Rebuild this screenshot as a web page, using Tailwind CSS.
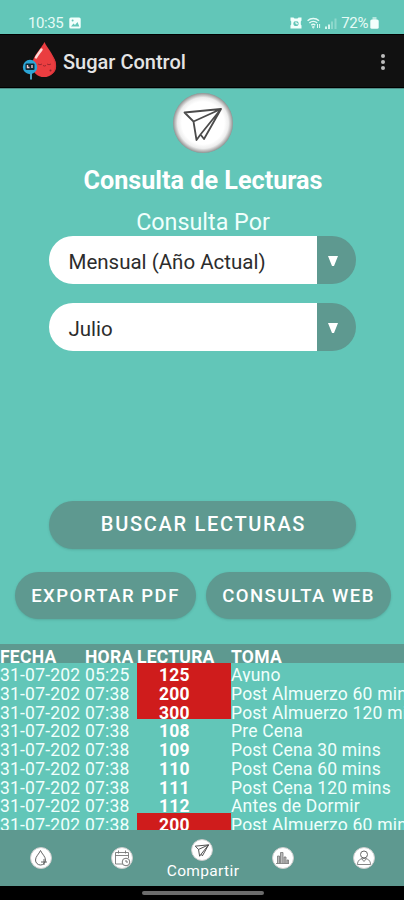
<!DOCTYPE html>
<html lang="es">
<head>
  <meta charset="UTF-8" />
  <title>Sugar Control</title>
  <meta name="viewport" content="width=device-width, initial-scale=1.0" />
  <script src="https://cdn.jsdelivr.net/npm/@tailwindcss/browser@4"></script>
</head>

<body class="bg-[#62c6b8] font-[Roboto,sans-serif] text-white overflow-hidden">
  <div class="w-[404px] h-[900px] flex flex-col overflow-hidden">

    <!-- Status bar -->
    <div class="h-[34px] shrink-0 flex items-end justify-between pl-7 pr-[25px] pb-[3px] text-[#e6fbf6]">
      <div class="flex items-center gap-[6px]">
        <span class="text-[15px] leading-4 tracking-[-0.4px]">10:35</span>
        <svg class="w-3 h-3" viewBox="0 0 12 12">
          <rect x="0.3" y="0.5" width="11.4" height="11" rx="1.5" fill="#f2fffc" />
          <path d="M2 9.5 4.5 6.5 6 8 8.5 5 10.3 9.5z" fill="#62c6b8" />
          <circle cx="3.6" cy="3.6" r="1" fill="#62c6b8" />
        </svg>
      </div>
      <div class="flex items-center">
        <svg class="w-3 h-3 mr-[5px]" viewBox="0 0 12 12">
          <path d="M.5 .5h3l1 1h3l1-1h3v3l-.7 1v3l.7 1v3H.5v-3l.7-1v-3l-.7-1z" fill="#f2fffc" />
          <circle cx="6" cy="6.5" r="2.6" fill="#62c6b8" />
          <path d="M6 4.5v2.3h2" fill="none" stroke="#fff" />
        </svg>
        <svg class="w-[14px] h-3 mr-1" viewBox="0 0 14 12" fill="none" stroke="#e6fbf6" stroke-width="1.5">
          <path d="M.6 3.8a8.5 8.5 0 0 1 11.4 0M2.4 6a6 6 0 0 1 7.8 0M4.3 8.2a3 3 0 0 1 4 0" />
          <path d="M5.3 9.7h2l-1 1.6zM10.5 7v4M12.6 7v4" stroke-width="1" />
        </svg>
        <svg class="w-3 h-3 mr-1" viewBox="0 0 12 12">
          <path d="M0 9.5h2V12H0zM3 7.5h2V12H3z" fill="#d5f5ef" />
          <path d="M6 4.5h2V12H6zM9.5 1.5h2V12h-2z" fill="#8dd8cc" />
        </svg>
        <span class="text-[15px] leading-4 tracking-[-0.4px]">72%</span>
        <svg class="w-[9px] h-3 ml-[2px]" viewBox="0 0 9 12" fill="#f2fffc">
          <rect x="2.5" y="0" width="4" height="3" fill="#b4e6de" />
          <rect x="0.3" y="2.5" width="8.4" height="9.3" rx="1.5" />
        </svg>
      </div>
    </div>

    <!-- App bar -->
    <div class="h-[54px] shrink-0 bg-[#111] border-y border-black flex items-center pl-[22px] pr-[19px]">
      <svg class="w-9 h-[38px] shrink-0" viewBox="0 0 36 38">
        <path d="M22.5 0C20 6 10 14 10 23.5a12 11.5 0 0 0 24 0C34 15 25 6 22.5 0z" fill="#ea3d40" />
        <path d="M27 9c6 9 9 18 1 24 7-2 7-10 5-15z" fill="#d8343a" />
        <path d="M19.5 7.5c-2 3-4.5 5.500-5.500 8" fill="none" stroke="#ffd9d6" stroke-width="2.400" stroke-linecap="round" />
        <path d="M16 22q2 1.500 4 0M25 22q2 1.500 4 0M21 23.500q1.500 1 3 0" fill="none" stroke="#8c2229" stroke-width="0.800" />
        <circle cx="28.500" cy="28.500" r="1" fill="#8c2229" />
        <path d="M9 31v6.500" stroke="#5bc4ec" stroke-width="1.600" />
        <circle cx="8" cy="25" r="7.200" fill="#2ba5d6" />
        <rect x="3.500" y="21.500" width="9" height="6.500" rx="1" fill="#102833" />
        <path d="M5.500 23v2.500h2M10 23v3" fill="none" stroke="#f5c9ca" stroke-width="1.400" />
      </svg>
      <h1 class="ml-[5px] mt-[2px] text-[20px] font-medium text-[#e4e4e4]">Sugar Control</h1>
      <div class="ml-auto mt-[1px] flex flex-col gap-[2px]">
        <i class="size-1 rounded-full bg-[#bdbdbd]"></i>
        <i class="size-1 rounded-full bg-[#bdbdbd]"></i>
        <i class="size-1 rounded-full bg-[#bdbdbd]"></i>
      </div>
    </div>

    <!-- Search form -->
    <div class="h-[556px] shrink-0 flex flex-col items-center pt-[4px] border-t border-[#4f8e87]">
      <div class="size-[60px] ml-px shrink-0 rounded-full bg-[radial-gradient(circle,#fff_50%,#eee_60%,#8f8f8f_71%)]">
        <svg class="size-[60px]" viewBox="0 0 60 60" fill="none" stroke="#4b4b4b" stroke-width="1.800" stroke-linejoin="round">
          <path d="M11.500 19.500 48 16 31 46 27.500 41.500 23.500 47 20.500 28.500zM20.500 28.500 48 16 27.500 41.500" />
        </svg>
      </div>
      <h2 class="mt-[11px] ml-[2px] h-[34px] leading-[34px] text-[25.200px] font-bold">Consulta de Lecturas</h2>
      <p class="mt-2 ml-[2px] h-[30px] leading-[33px] text-[23.300px] text-[#f0fffc]">Consulta Por</p>

      <div class="w-[307px] h-12 shrink-0 rounded-full overflow-hidden flex">
        <div class="w-[268px] bg-white text-[#2c2c2c] text-[20.500px] leading-[52px] pl-5">Mensual (Año Actual)</div>
        <div class="flex-1 bg-[#5e9990] flex items-center pl-[11px]">
          <svg class="w-[10px] h-[10px] mt-px" viewBox="0 0 10 10"><path d="M0 0h10L6 10H4z" fill="#fff" /></svg>
        </div>
      </div>
      <div class="mt-[19px] w-[307px] h-12 shrink-0 rounded-full overflow-hidden flex">
        <div class="w-[268px] bg-white text-[#2c2c2c] text-[20.500px] leading-[52px] pl-5">Julio</div>
        <div class="flex-1 bg-[#5e9990] flex items-center pl-[11px]">
          <svg class="w-[10px] h-[10px] mt-px" viewBox="0 0 10 10"><path d="M0 0h10L6 10H4z" fill="#fff" /></svg>
        </div>
      </div>

      <button class="mt-[150px] w-[307px] h-12 shrink-0 rounded-full bg-[#5e9990] shadow-sm text-[20px] font-medium tracking-[1.700px] pl-[3px] pb-[2px]">BUSCAR LECTURAS</button>
      <div class="mt-[23px] w-full flex gap-[10px] pl-[15px]">
        <button class="w-[181px] h-[47px] rounded-full bg-[#5e9990] shadow-sm text-[18.500px] font-medium tracking-[1.500px] pt-[2px]">EXPORTAR PDF</button>
        <button class="w-[185px] h-[47px] rounded-full bg-[#5e9990] shadow-sm text-[18.500px] font-medium tracking-[1.500px] pt-[2px]">CONSULTA WEB</button>
      </div>
    </div>

    <!-- Readings -->
    <div class="h-[186px] shrink-0 overflow-hidden text-[17.500px] whitespace-nowrap">
      <div class="h-[19px] bg-[#5e9990] grid grid-cols-[85px_52px_94px_1fr] font-bold leading-[26px] text-[17.500px] tracking-[0.250px]">
        <span>FECHA</span><span>HORA</span><span>LECTURA</span><span>TOMA</span>
      </div>
      <div id="rows" class="text-[#f0fffc]"></div>
    </div>

    <!-- Bottom navigation -->
    <div class="h-14 shrink-0 bg-[#5e9990] grid grid-cols-5 justify-items-center">
      <svg class="size-[22px] mt-[17px] ml-px" viewBox="0 0 22 22" fill="none" stroke="#555">
        <circle cx="11" cy="11" r="10.500" fill="#fff" stroke="#ccc" />
        <path d="M10.500 3.500C9 7 5.500 9.500 5.500 13a5 5 0 0 0 10 0c0-3.500-3.500-6-5-9.500zM11 15h6M14 12v6" stroke-width="0.900" />
      </svg>
      <svg class="size-[22px] mt-[17px] ml-px" viewBox="0 0 22 22" fill="none" stroke="#777">
        <circle cx="11" cy="11" r="10.500" fill="#fff" stroke="#ccc" />
        <path d="M12 17H4.500V5.500h13V11M4.500 8.500h13M7.500 3.500v3M14.500 3.500v3" stroke-width="0.900" />
        <circle cx="15" cy="15" r="3.800" fill="#fff" /><path d="M15 13v2h2" />
      </svg>
      <div class="flex flex-col items-center pt-[9px]">
        <svg class="size-[22px] ml-px" viewBox="0 0 60 60" fill="none" stroke="#4b4b4b" stroke-width="2.600" stroke-linejoin="round">
          <circle cx="30" cy="30" r="28.500" fill="#fff" stroke="#ccc" />
          <path d="M11.500 19.500 48 16 31 46 27.500 41.500 23.500 47 20.500 28.500zM20.500 28.500 48 16 27.500 41.500" />
        </svg>
        <span class="ml-[2px] text-[15.500px] leading-[20px] tracking-[0.350px]">Compartir</span>
      </div>
      <svg class="size-[22px] mt-[17px] ml-px" viewBox="0 0 22 22" fill="none" stroke="#777">
        <circle cx="11" cy="11" r="10.500" fill="#fff" stroke="#ccc" />
        <path d="M4 16.500h13M5.500 16.500V9h2v7.500M8.500 16.500v-11h2.500v11M12 16.500V10h2v6.500M15 16.500V13h1.500v3.500" fill="#bbb" stroke-width="0.800" />
      </svg>
      <svg class="size-[22px] mt-[17px] ml-px" viewBox="0 0 22 22" fill="none" stroke="#666">
        <circle cx="11" cy="11" r="10.500" fill="#fff" stroke="#ccc" />
        <circle cx="11" cy="7.500" r="3.500" />
        <path d="M4.500 17.500c0-4 2.500-6 6.500-6s6.500 2 6.500 6zM8.500 11.500l2.500 3 2.500-3" stroke-width="0.800" />
      </svg>
    </div>
    <div class="h-[14px] shrink-0 bg-black flex justify-center pt-[5px]">
      <div class="w-[122px] h-1 ml-[2px] rounded-full bg-[#6b6b6b]"></div>
    </div>
  </div>

  <script>
    const readings = [
      ['05:25', 125, 'Ayuno', true],
      ['07:38', 200, 'Post Almuerzo 60 mins', true],
      ['07:38', 300, 'Post Almuerzo 120 mins', true],
      ['07:38', 108, 'Pre Cena'],
      ['07:38', 109, 'Post Cena 30 mins'],
      ['07:38', 110, 'Post Cena 60 mins'],
      ['07:38', 111, 'Post Cena 120 mins'],
      ['07:38', 112, 'Antes de Dormir'],
      ['07:38', 200, 'Post Almuerzo 60 mins', true]
    ];

    // each row is a little shorter than its text, so descenders get cut
    document.getElementById('rows').innerHTML = readings.map(([hora, lectura, toma, alerta]) => `
      <div class="h-[18.750px] grid grid-cols-[85px_52px_94px_1fr] leading-[25px] tracking-[0.200px] overflow-hidden">
        <span>31-07-202</span>
        <span>${hora}</span>
        <span class="font-bold pl-[22px] text-white ${alerta ? 'bg-[#cf1c1c]' : ''}">${lectura}</span>
        <span>${toma}</span>
      </div>
    `).join('');
  </script>
</body>
</html>
